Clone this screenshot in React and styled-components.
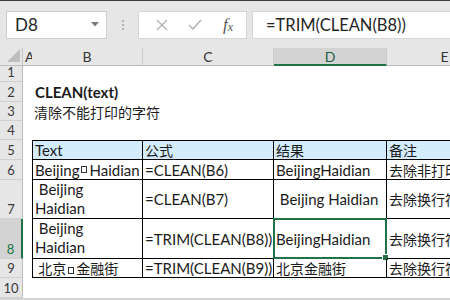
import styled, { createGlobalStyle } from "styled-components";

const GlobalStyle = createGlobalStyle`
  body {
    margin: 0;
    background: #ffffff;
    font-family: "Lato", "Noto Sans CJK SC", sans-serif;
  }
`;

const columns = ["A", "B", "C", "D", "E"];
const rowHeights = [16, 20, 19, 19, 20, 20, 39, 40, 19, 20];

function Box() {
  return <Unprintable />;
}

function App() {
  return (
    <Page>
      <GlobalStyle />
      <TopBar>
        <NameBox>
          <span>D8</span>
          <svg width="8" height="5" viewBox="0 0 8 5">
            <path d="M0 0 L8 0 L4 4.5 Z" fill="#7a7a7a" />
          </svg>
        </NameBox>
        <Grip>
          <i />
          <i />
          <i />
        </Grip>
        <FxBox>
          <svg width="12" height="12" viewBox="0 0 12 12">
            <path d="M1 1 L11 11 M11 1 L1 11" stroke="#b4b4b4" strokeWidth="1.4" fill="none" />
          </svg>
          <svg width="14" height="11" viewBox="0 0 14 11">
            <path d="M1 6 L5 10 L13 1" stroke="#b4b4b4" strokeWidth="1.5" fill="none" />
          </svg>
          <Fx>
            f<sub>x</sub>
          </Fx>
        </FxBox>
        <FormulaInput>=TRIM(CLEAN(B8))</FormulaInput>
      </TopBar>

      <Sheet $rows={rowHeights}>
        <Corner>
          <svg width="13" height="13" viewBox="0 0 13 13">
            <path d="M13 0 L13 13 L0 13 Z" fill="#bdbdbd" />
          </svg>
        </Corner>
        {columns.map((c) => (
          <ColHead key={c} $active={c === "D"} $narrow={c === "A"}>
            {c}
          </ColHead>
        ))}

        {/* row 1 */}
        <RowHead>1</RowHead>
        <Cell />
        <Cell />
        <Cell />
        <Cell />
        <Cell />

        {/* row 2 */}
        <RowHead>2</RowHead>
        <Cell />
        <Cell>
          <Title>CLEAN(text)</Title>
        </Cell>
        <Cell />
        <Cell />
        <Cell />

        {/* row 3 */}
        <RowHead>3</RowHead>
        <Cell />
        <Cell>
          <Cjk>清除不能打印的字符</Cjk>
        </Cell>
        <Cell />
        <Cell />
        <Cell />

        {/* row 4 */}
        <RowHead>4</RowHead>
        <Cell />
        <Cell />
        <Cell />
        <Cell />
        <Cell />

        {/* row 5 */}
        <RowHead>5</RowHead>
        <Cell />
        <Cell $table $top $left $head>Text</Cell>
        <Cell $table $top $head>
          <Cjk>公式</Cjk>
        </Cell>
        <Cell $table $top $head>
          <Cjk>结果</Cjk>
        </Cell>
        <Cell $table $top $head>
          <Cjk>备注</Cjk>
        </Cell>

        {/* row 6 */}
        <RowHead>6</RowHead>
        <Cell />
        <Cell $table $left>
          Beijing
          <Box />
          Haidian
        </Cell>
        <Cell $table>=CLEAN(B6)</Cell>
        <Cell $table>BeijingHaidian</Cell>
        <Cell $table>
          <Cjk>去除非打印字符</Cjk>
        </Cell>

        {/* row 7 */}
        <RowHead>7</RowHead>
        <Cell />
        <Cell $table $left $wrap>
          {"\u00a0Beijing"}
          <br />
          Haidian
        </Cell>
        <Cell $table>=CLEAN(B7)</Cell>
        <Cell $table>{"\u00a0Beijing Haidian"}</Cell>
        <Cell $table>
          <Cjk>去除换行符</Cjk>
        </Cell>

        {/* row 8 */}
        <RowHead $active>8</RowHead>
        <Cell />
        <Cell $table $left $wrap>
          {"\u00a0Beijing"}
          <br />
          Haidian
        </Cell>
        <Cell $table>=TRIM(CLEAN(B8))</Cell>
        <Cell $table>
          BeijingHaidian
          <Selection>
            <Handle />
          </Selection>
        </Cell>
        <Cell $table>
          <Cjk>去除换行符</Cjk>
        </Cell>

        {/* row 9 */}
        <RowHead>9</RowHead>
        <Cell />
        <Cell $table $left>
          <Cjk>
            {"\u00a0北京"}
            <Box />
            金融街
          </Cjk>
        </Cell>
        <Cell $table>=TRIM(CLEAN(B9))</Cell>
        <Cell $table>
          <Cjk>北京金融街</Cjk>
        </Cell>
        <Cell $table>
          <Cjk>去除换行符</Cjk>
        </Cell>

        {/* row 10 */}
        <RowHead>10</RowHead>
        <Cell />
        <Cell />
        <Cell />
        <Cell />
        <Cell />
      </Sheet>
    </Page>
  );
}

const Page = styled.div`
  width: 450px;
  height: 300px;
  overflow: hidden;
  background: #ffffff;
  border-bottom: 2px solid #d4d4d4;
  box-sizing: border-box;
`;

const TopBar = styled.div`
  height: 48px;
  box-sizing: border-box;
  display: flex;
  align-items: center;
  padding-left: 6px;
  background: #e6e6e6;
  border-top: 1px solid #3a3a3a;
`;

const NameBox = styled.div`
  width: 101px;
  height: 28px;
  box-sizing: border-box;
  display: flex;
  align-items: center;
  justify-content: space-between;
  padding: 0 7px 0 8px;
  background: #ffffff;
  border: 1px solid #cdcdcd;
  font-size: 17px;
  color: #262626;
`;

const Grip = styled.div`
  width: 31px;
  display: flex;
  flex-direction: column;
  align-items: center;
  gap: 2px;

  i {
    display: block;
    width: 2px;
    height: 2px;
    background: #b3b3b3;
  }
`;

const FxBox = styled.div`
  width: 109px;
  height: 28px;
  box-sizing: border-box;
  display: flex;
  align-items: center;
  padding-left: 17px;
  background: #ffffff;
  border: 1px solid #d6d6d6;

  svg:first-child {
    margin-right: 20px;
  }
  svg:nth-child(2) {
    margin-right: 21px;
  }
`;

const Fx = styled.span`
  font-family: "Liberation Serif", serif;
  font-style: italic;
  font-size: 17px;
  color: #555555;

  sub {
    font-size: 12px;
    vertical-align: -1px;
  }
`;

const FormulaInput = styled.div`
  flex: 1;
  height: 28px;
  margin-left: 5px;
  box-sizing: border-box;
  display: flex;
  align-items: center;
  padding-left: 13px;
  background: #ffffff;
  border: 1px solid #d6d6d6;
  border-right: none;
  font-size: 16.5px;
  color: #262626;
  white-space: nowrap;
`;

const Sheet = styled.div`
  display: grid;
  grid-template-columns: 23px 9px 111px 131px 113px 116px;
  grid-template-rows: 18px ${(p) => p.$rows.map((h) => `${h}px`).join(" ")};
  width: 503px;
`;

const Corner = styled.div`
  background: #e6e6e6;
  border-right: 1px solid #c4c4c4;
  border-bottom: 1px solid #bdbdbd;
  box-sizing: border-box;
  display: flex;
  align-items: flex-end;
  justify-content: flex-end;
  padding: 0 2px 3px 0;
`;

const ColHead = styled.div`
  box-sizing: border-box;
  display: flex;
  align-items: center;
  justify-content: ${(p) => (p.$narrow ? "flex-start" : "center")};
  padding-left: ${(p) => (p.$narrow ? "2px" : "0")};
  background: ${(p) => (p.$active ? "#d3d3d3" : "#e6e6e6")};
  border-right: 1px solid ${(p) => (p.$narrow ? "transparent" : "#cacaca")};
  border-bottom: ${(p) => (p.$active ? "2px solid #217346" : "1px solid #bdbdbd")};
  font-size: 14px;
  color: ${(p) => (p.$active ? "#1d5e3a" : "#333333")};
`;

const RowHead = styled.div`
  box-sizing: border-box;
  display: flex;
  align-items: flex-end;
  justify-content: center;
  padding-bottom: 1px;
  background: ${(p) => (p.$active ? "#d3d3d3" : "#e6e6e6")};
  border-right: ${(p) => (p.$active ? "2px solid #217346" : "1px solid #bdbdbd")};
  border-bottom: 1px solid #d0d0d0;
  font-size: 13px;
  color: ${(p) => (p.$active ? "#217346" : "#3a3a3a")};
`;

const Cell = styled.div`
  position: relative;
  box-sizing: border-box;
  display: flex;
  align-items: center;
  padding-left: 2px;
  white-space: nowrap;
  overflow: visible;
  font-size: 15px;
  line-height: ${(p) => (p.$wrap ? "19px" : "normal")};
  color: #1a1a1a;
  background: ${(p) => (p.$head ? "#d4edfc" : "transparent")};
  border-right: ${(p) => (p.$table ? "1px solid #000" : "none")};
  border-bottom: ${(p) => (p.$table ? "1px solid #000" : "none")};
  border-top: ${(p) => (p.$top ? "1px solid #000" : "none")};
  border-left: ${(p) => (p.$left ? "1px solid #000" : "none")};
  ${(p) => p.$wrap && "display: block; white-space: normal;"}
`;

const Cjk = styled.span`
  font-family: "Noto Sans CJK SC", sans-serif;
  font-size: 14px;
`;

const Title = styled.span`
  font-weight: bold;
  font-size: 15px;
  padding-left: 1px;
`;

const Unprintable = styled.span`
  display: inline-block;
  width: 4px;
  height: 5px;
  margin: 0 2px;
  border: 1px solid #333;
  vertical-align: 0px;
`;

const Selection = styled.div`
  position: absolute;
  inset: -1px -1px -1px -1px;
  border: 2px solid #217346;
  pointer-events: none;
`;

const Handle = styled.div`
  position: absolute;
  right: -4px;
  bottom: -4px;
  width: 5px;
  height: 5px;
  background: #217346;
  border: 1px solid #ffffff;
`;

export default App;
